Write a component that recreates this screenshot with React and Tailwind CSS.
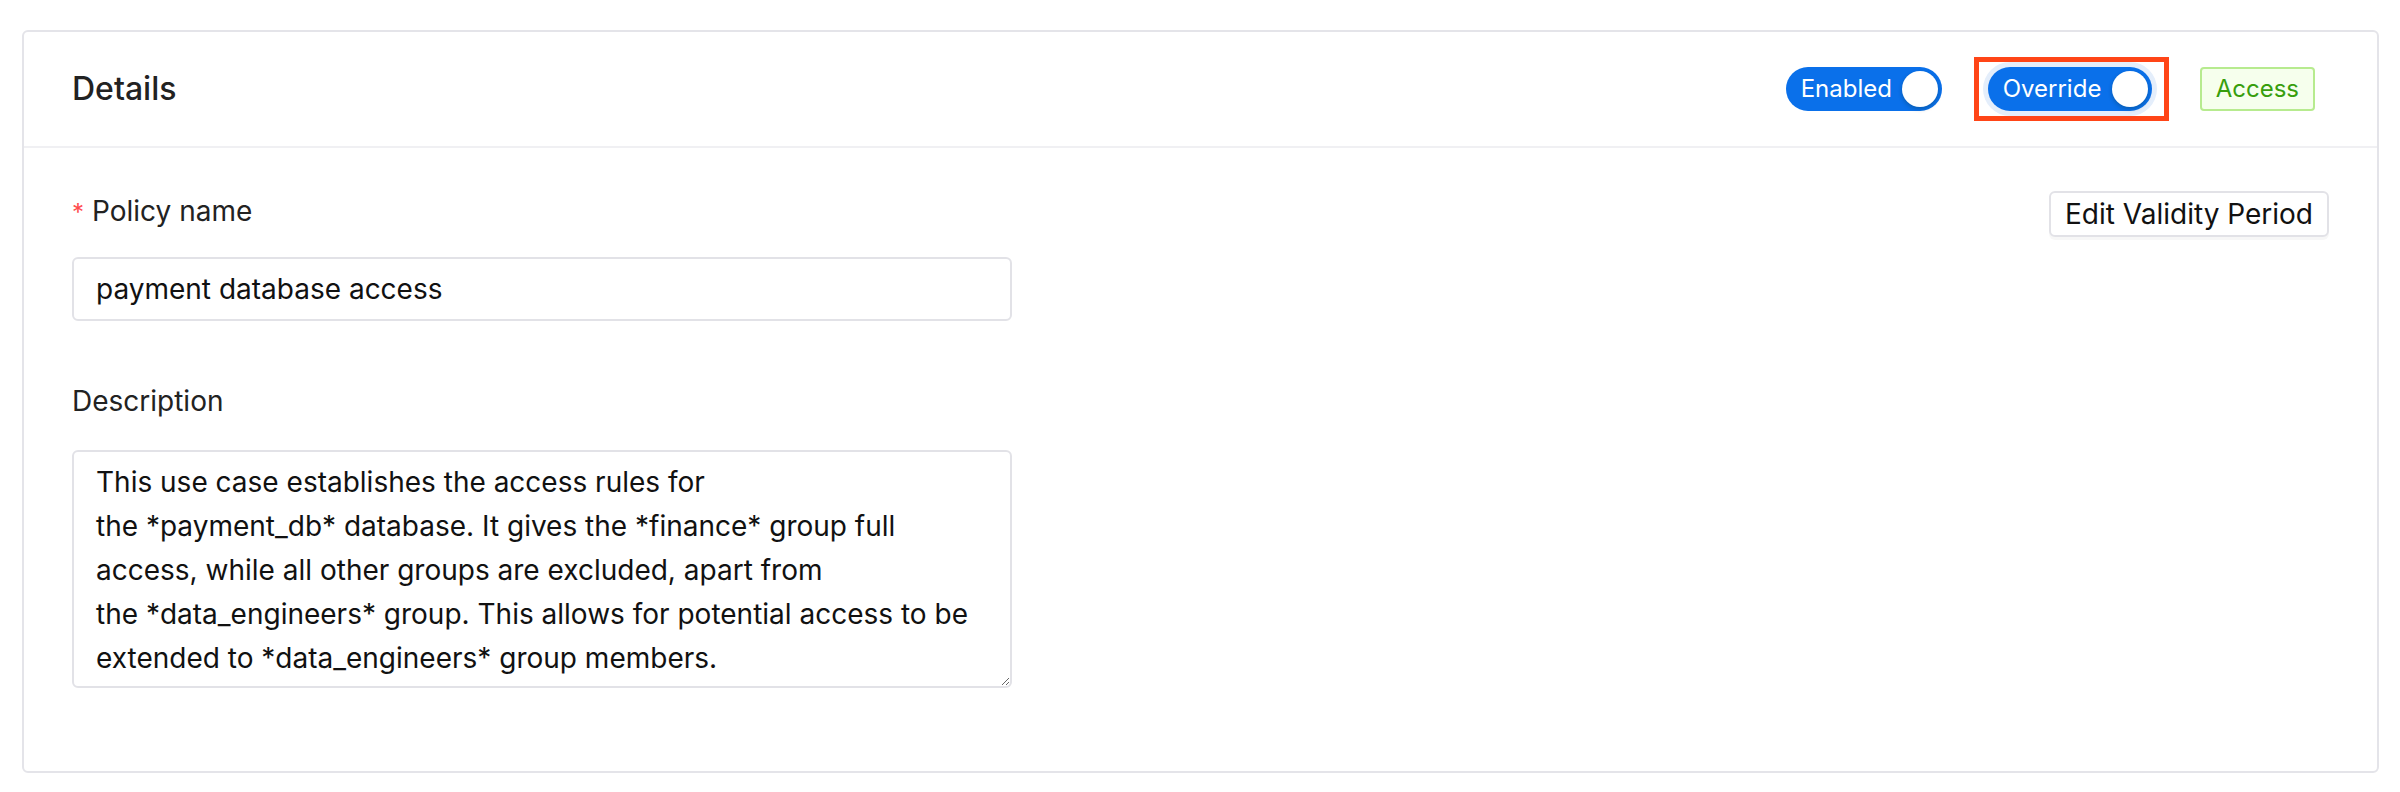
import React from "react";

function Switch({ label, width, focused }) {
  return (
    <div
      className={`flex items-center h-[44px] rounded-full bg-[#0a70ea] pl-[15px] pr-[4px] ${width} ${
        focused ? "ring-[5px] ring-[#e4eefb]" : ""
      }`}
    >
      <span className="flex-1 text-white text-[24px] leading-[44px]">{label}</span>
      <span className="w-[36px] h-[36px] rounded-full bg-white shadow-[0_2px_4px_rgba(0,35,11,0.25)]" />
    </div>
  );
}

const description =
  "This use case establishes the access rules for\nthe *payment_db* database. It gives the *finance* group full\naccess, while all other groups are excluded, apart from\nthe *data_engineers* group. This allows for potential access to be\nextended to *data_engineers* group members.";

export default function App() {
  return (
    <div
      className="min-h-screen bg-white pt-[30px] pl-[22px] pr-[21px] text-[#1f1f1f]"
      style={{ fontFamily: "Inter, 'Noto Sans', sans-serif" }}
    >
      <div className="border-2 border-[#e4e4e9] rounded-[6px] bg-white">
        <div className="flex items-center justify-between h-[116px] pl-[48px] pr-[62px] border-b-2 border-[#f0f0f3]">
          <h2 className="text-[32px] font-medium text-[#222]">Details</h2>
          <div className="flex items-center">
            <Switch label="Enabled" width="w-[156px]" />
            <div className="ml-[32px] border-[5px] border-[#ff4517] pl-[9px] pr-[12px] py-[5px]">
              <Switch label="Override" width="w-[164px]" focused />
            </div>
            <span className="ml-[31px] h-[44px] px-[14px] flex items-center rounded-[4px] border-2 border-[#b7eb8f] bg-[#f6ffed] text-[#389e0d] text-[24px]">
              Access
            </span>
          </div>
        </div>

        <div className="flex justify-between pl-[48px] pr-[48px] pt-[41px] pb-[83px]">
          <div className="w-[940px] flex flex-col">
            <label className="text-[28px] leading-[44px] text-[#222]">
              <span className="text-[#ff4d4f] text-[24px] mr-[8px]">*</span>
              Policy name
            </label>
            <input
              className="mt-[22px] h-[64px] border-2 border-[#e2e2e7] rounded-[6px] px-[22px] text-[28px] text-[#111] outline-none"
              defaultValue="payment database access"
            />
            <label className="mt-[58px] text-[28px] leading-[44px] text-[#222]">Description</label>
            <textarea
              className="mt-[27px] h-[238px] border-2 border-[#e2e2e7] rounded-[6px] px-[22px] py-[8px] text-[28px] leading-[44px] text-[#111] outline-none whitespace-pre-wrap"
              defaultValue={description}
            />
          </div>
          <div>
            <button className="mt-[2px] h-[46px] px-[14px] border-2 border-[#e2e2e7] rounded-[6px] bg-white text-[28px] text-[#111] shadow-[0_3px_0_rgba(0,0,0,0.03)]">
              Edit Validity Period
            </button>
          </div>
        </div>
      </div>
    </div>
  );
}
